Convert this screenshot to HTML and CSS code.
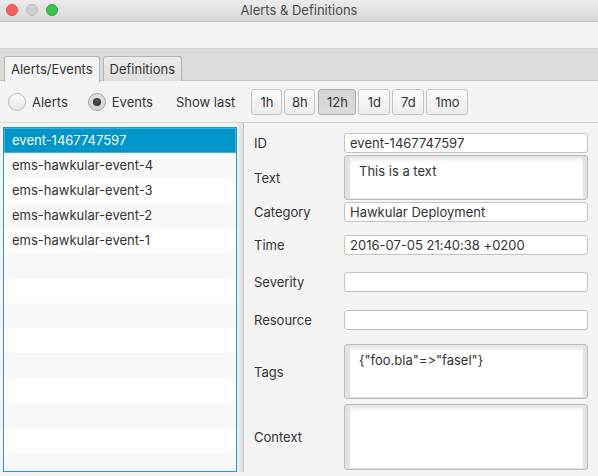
FILE: index.html
```html
<!DOCTYPE html>
<html>
<head>
<meta charset="utf-8">
<link rel="stylesheet" href="styles.css">
</head>
<body>
<div class="window">
  <div class="titlebar">
    <div class="lights">
      <span class="light red"></span>
      <span class="light grey"></span>
      <span class="light green"></span>
    </div>
    <div class="title">Alerts &amp; Definitions</div>
    <div></div>
  </div>
  <div class="menuspace"></div>
  <div class="tabheader">
    <div class="tab selected">Alerts/Events</div>
    <div class="tab">Definitions</div>
  </div>
  <div class="filterbar">
    <label class="radio"><span class="circle"></span><span>Alerts</span></label>
    <label class="radio events"><span class="circle on"><span class="dot"></span></span><span>Events</span></label>
    <span class="showlast">Show last</span>
    <div class="buttons">
      <span class="btn w31">1h</span>
      <span class="btn w31">8h</span>
      <span class="btn w38 pressed">12h</span>
      <span class="btn w32">1d</span>
      <span class="btn w32">7d</span>
      <span class="btn w42">1mo</span>
    </div>
  </div>
  <div class="split">
    <div class="listpane">
      <div class="list">
        <div class="item selected">event-1467747597</div>
        <div class="item odd">ems-hawkular-event-4</div>
        <div class="item">ems-hawkular-event-3</div>
        <div class="item odd">ems-hawkular-event-2</div>
        <div class="item">ems-hawkular-event-1</div>
        <div class="item odd"></div>
        <div class="item"></div>
        <div class="item odd"></div>
        <div class="item"></div>
        <div class="item odd"></div>
        <div class="item"></div>
        <div class="item odd"></div>
        <div class="item"></div>
        <div class="item odd"></div>
      </div>
    </div>
    <div class="divider"></div>
    <div class="form">
      <div class="row">
        <div class="label">ID</div>
        <div class="field">event-1467747597</div>
      </div>
      <div class="row mt2">
        <div class="label">Text</div>
        <div class="area h45"><div class="areain">This is a text</div></div>
      </div>
      <div class="row mt2">
        <div class="label">Category</div>
        <div class="field">Hawkular Deployment</div>
      </div>
      <div class="row mt13">
        <div class="label">Time</div>
        <div class="field">2016-07-05 21:40:38 +0200</div>
      </div>
      <div class="row mt17">
        <div class="label">Severity</div>
        <div class="field"></div>
      </div>
      <div class="row mt18">
        <div class="label">Resource</div>
        <div class="field"></div>
      </div>
      <div class="row mt14">
        <div class="label">Tags</div>
        <div class="area h55"><div class="areain">{"foo.bla"=&gt;"fasel"}</div></div>
      </div>
      <div class="row mt5">
        <div class="label">Context</div>
        <div class="area h66"><div class="areain"></div></div>
      </div>
    </div>
  </div>
</div>
</body>
</html>
```
FILE: styles.css
```css
* { box-sizing: border-box; }
html, body { margin: 0; padding: 0; }
body {
  font-family: "Inter", "Liberation Sans", sans-serif;
  font-size: 13px;
  color: #333;
  background: #f4f4f4;
  font-variant-ligatures: none;
  font-feature-settings: "calt" 0, "liga" 0;
}
.window {
  width: 598px;
  height: 476px;
  background: #f4f4f4;
  overflow: hidden;
}
.titlebar {
  height: 22px;
  display: grid;
  grid-template-columns: 1fr auto 1fr;
  align-items: center;
  background: linear-gradient(#ececec, #d8d8d8);
  border-bottom: 1px solid #c0c0c0;
}
.lights {
  display: flex;
  gap: 8px;
  padding-left: 6px;
  padding-bottom: 1px;
}
.light {
  width: 12px;
  height: 12px;
  border-radius: 50%;
  display: block;
}
.light.red { background: #fc605c; border: 1px solid #de4b45; }
.light.grey { background: #d0d0d0; border: 1px solid #bdbdbd; }
.light.green { background: #34c84a; border: 1px solid #28a93a; }
.title {
  color: #4b4b4b;
  font-size: 13px;
  padding-bottom: 1px;
}
.menuspace {
  height: 26px;
  background: #f4f4f4;
}
.tabheader {
  height: 33px;
  background: #dcdcdc;
  border-top: 1px solid #d2d2d2;
  display: flex;
  align-items: flex-end;
  gap: 3px;
  padding-left: 4px;
  position: relative;
}
.tabheader::after {
  content: "";
  position: absolute;
  left: 0; right: 0; bottom: 0;
  height: 1px;
  background: #c4c4c4;
}
.tab {
  height: 25px;
  padding: 0 6px;
  line-height: 24px;
  border: 1px solid #b3b3b3;
  border-bottom: none;
  border-radius: 3px 3px 0 0;
  background: linear-gradient(#ececec, #e0e0e0);
  color: #333;
  position: relative;
  z-index: 1;
}
.tab.selected {
  background: #f4f4f4;
  height: 26px;
  margin-bottom: -1px;
}
.filterbar {
  height: 42px;
  display: flex;
  align-items: center;
  padding-left: 8px;
  border-bottom: 1px solid #d6d6d6;
  padding-top: 1px;
}
.radio {
  display: flex;
  align-items: center;
  gap: 6px;
}
.radio.events { margin-left: 20px; }
.circle {
  width: 18px;
  height: 18px;
  border-radius: 50%;
  border: 1px solid #b7b7b7;
  background: linear-gradient(#fdfdfd, #e9e9e9);
  display: flex;
  align-items: center;
  justify-content: center;
}
.circle.on {
  border-color: #a3a3a3;
  background: linear-gradient(#e2e2e2, #d2d2d2);
}
.dot {
  width: 8px;
  height: 8px;
  border-radius: 50%;
  background: radial-gradient(circle at 50% 40%, #555, #2a2a2a);
}
.showlast { margin-left: 23px; }
.buttons {
  display: flex;
  gap: 2px;
  margin-left: 16px;
}
.btn {
  height: 26px;
  line-height: 24px;
  text-align: center;
  border: 1px solid #c4c4c4;
  border-radius: 3px;
  background: linear-gradient(#fbfbfb, #ededed);
  color: #333;
}
.w31 { width: 31px; }
.w32 { width: 32px; }
.w38 { width: 38px; }
.w42 { width: 42px; }
.btn.pressed {
  background: linear-gradient(#d4d4d4, #dcdcdc);
  border-color: #adadad;
  margin-left: 1px;
}
.split {
  display: flex;
  height: 353px;
}
.listpane {
  width: 237px;
  padding: 4px 0 4px 3px;
}
.list {
  height: 345px;
  border: 1px solid #1a9fd2;
  background: #fff;
  overflow: hidden;
}
.item {
  height: 25px;
  line-height: 25px;
  padding-left: 8px;
  background: #fff;
  white-space: nowrap;
}
.item.odd { background: #f8f8f8; }
.item.selected {
  background: #0096c9;
  color: #fff;
  box-shadow: inset 0 0 0 1px #3fb0da;
}
.divider {
  width: 7px;
  height: 349px;
  background: linear-gradient(90deg, #f0f0f0, #dcdcdc);
  border-right: 1px solid #c6c6c6;
}
.form {
  padding: 10px 0 0 10px;
}
.row {
  display: flex;
  align-items: center;
}
.mt2 { margin-top: 2px; }
.mt5 { margin-top: 5px; }
.mt13 { margin-top: 13px; }
.mt14 { margin-top: 14px; }
.mt17 { margin-top: 17px; }
.mt18 { margin-top: 18px; }
.label {
  width: 90px;
  color: #333;
}
.field {
  width: 244px;
  height: 20px;
  line-height: 18px;
  border: 1px solid #c3c3c3;
  border-radius: 3px;
  background: #fff;
  padding: 0 5px;
  white-space: nowrap;
}
.area {
  width: 244px;
  border: 1px solid #bdbdbd;
  border-radius: 3px;
  background: #e3e3e3;
  padding: 1px 4px 1px 5px;
  display: flex;
}
.h45 { height: 45px; }
.h55 { height: 55px; }
.h66 { height: 66px; }
.areain {
  flex: 1;
  background: #fff;
  box-shadow: inset 0 4px 4px -2px rgba(0,0,0,0.12);
  padding: 6px 0 0 9px;
  line-height: 16px;
}
```
